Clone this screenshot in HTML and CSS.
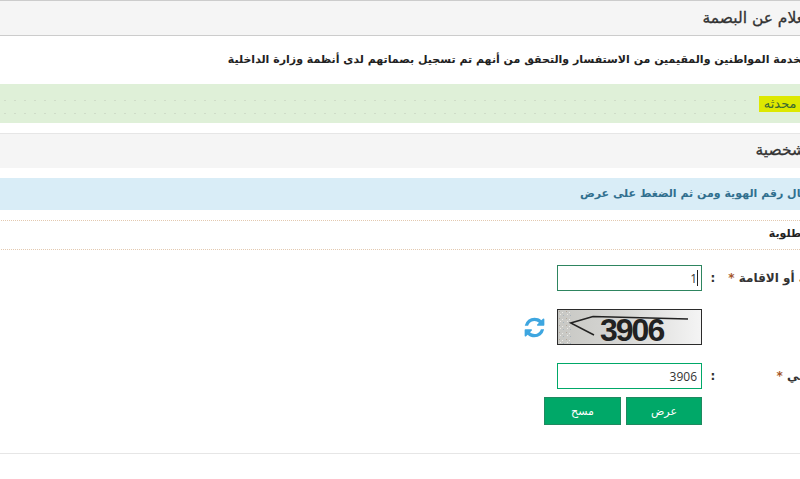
FILE: index.html
```html
<!DOCTYPE html>
<html lang="ar">
<head>
  <meta charset="UTF-8" />
  <meta name="viewport" content="width=device-width, initial-scale=1.0" />
  <title>الاستعلام عن البصمة</title>
  <link rel="stylesheet" href="styles.css">
</head>
<body>
  <div class="page" dir="rtl">
    <h1 class="panel-title first">الاستعلام عن البصمة</h1>
    <p class="intro">هذه الخدمة لخدمة المواطنين والمقيمين من الاستفسار والتحقق من أنهم تم تسجيل بصماتهم لدى أنظمة وزارة الداخلية</p>

    <div class="notice">
      <mark class="stamp">بيانات محدثه</mark>
      <span class="dots"></span>
    </div>

    <h2 class="panel-title second">المعلومات الشخصية</h2>
    <div class="hint">يرجى إدخال رقم الهوية ومن ثم الضغط على عرض</div>
    <div class="required-note">الحقول المطلوبة</div>

    <form class="form" onsubmit="return false">
      <div class="row">
        <label class="label" for="idNumber">رقم الهوية أو الاقامة <b>*</b></label>
        <span class="colon">:</span>
        <div class="field input-wrap">
          <input class="text-input first-input" type="text" id="idNumber" value="1" dir="ltr" />
          <span class="caret"></span>
        </div>
      </div>

      <div class="row captcha-row">
        <span class="label"></span>
        <span class="colon"></span>
        <div class="field captcha-field">
          <svg class="captcha" viewBox="0 0 143 34" width="145" height="36" preserveAspectRatio="none">
            <defs>
              <linearGradient id="fade" x1="0" x2="1" y1="0" y2="0">
                <stop offset="0" stop-color="#c8c8c4" />
                <stop offset="0.45" stop-color="#d6d6d4" />
                <stop offset="1" stop-color="#f4f4f4" />
              </linearGradient>
              <pattern id="speck" width="7" height="7" patternUnits="userSpaceOnUse">
                <rect x="1" y="1" width="1" height="1" fill="#b5a89c" />
                <rect x="4" y="2" width="1" height="1" fill="#ecebe8" />
                <rect x="2" y="4" width="1" height="1" fill="#ecebe8" />
                <rect x="5" y="5" width="1" height="1" fill="#a9b4bd" />
              </pattern>
            </defs>
            <rect width="143" height="34" fill="url(#fade)" />
            <rect width="15" height="34" fill="url(#speck)" />
            <path d="M36 25 L12.7 13 L35 6.6 L130 9" fill="none" stroke="#222" stroke-width="1.5" />
            <text class="captcha-text" x="42" y="31">3906</text>
          </svg>
          <svg class="reload" viewBox="0 0 1792 1792" width="23" height="23">
            <path fill="#3ea6e0" d="M1639 1056q0 5-1 7-64 268-268 434.5t-478 166.5q-146 0-282.5-55t-243.5-157l-129 129q-19 19-45 19t-45-19-19-45v-448q0-26 19-45t45-19h448q26 0 45 19t19 45-19 45l-137 137q71 66 161 102t187 36q134 0 250-65t186-179q11-17 53-117 8-23 30-23h192q13 0 22.5 9.5t9.5 22.5zm25-800v448q0 26-19 45t-45 19h-448q-26 0-45-19t-19-45 19-45l138-138q-148-137-349-137-134 0-250 65t-186 179q-11 17-53 117-8 23-30 23h-199q-13 0-22.5-9.5t-9.5-22.5v-7q65-268 270-434.5t480-166.5q146 0 284 55.5t245 156.5l130-129q19-19 45-19t45 19 19 45z" />
          </svg>
        </div>
      </div>

      <div class="row">
        <label class="label" for="captchaCode">الرمز المرئي <b>*</b></label>
        <span class="colon">:</span>
        <div class="field"><input class="text-input" type="text" id="captchaCode" value="3906" dir="ltr" /></div>
      </div>

      <div class="row buttons-row">
        <span class="label"></span>
        <span class="colon"></span>
        <div class="field buttons">
          <button class="btn">عرض</button>
          <button class="btn btn-clear">مسح</button>
        </div>
      </div>
    </form>

    <div class="bottom-line"></div>
  </div>
</body>
</html>
```

FILE: styles.css
```css
html, body {
  margin: 0;
  overflow: hidden;
  background: #fff;
}
.page {
  width: 1200px;
  margin-left: -300px;
  font-family: "DejaVu Sans", sans-serif;
  color: #333;
}
.panel-title {
  margin: 0;
  background: #f5f5f5;
  font-weight: normal;
  font-size: 15.5px;
  -webkit-text-stroke: 0.3px #333;
}
.panel-title.first {
  height: 34px;
  line-height: 34px;
  border-top: 1px solid #ccc;
  border-bottom: 1px solid #ccc;
  padding-right: 65px;
}
.panel-title.second {
  height: 34px;
  line-height: 32px;
  border-top: 1px solid #e6e6e6;
  margin-top: 10px;
  padding-right: 14px;
}
.intro {
  margin: 0;
  height: 48px;
  line-height: 48px;
  padding-right: 31px;
  font-size: 11px;
  font-weight: bold;
  color: #222;
}
.notice {
  height: 39px;
  background: #dff0d8;
  display: flex;
  align-items: center;
  padding-right: 63px;
}
.stamp {
  background: #dde800;
  color: #3c6a30;
  font-size: 13px;
  line-height: 16px;
  padding: 0 5px;
  margin-left: 8px;
}
.dots {
  flex: 1;
  height: 26px;
  background-image: radial-gradient(circle, #cfdcc8 0.6px, transparent 1px);
  background-size: 10px 13px;
  background-position: 0 3px;
}
.hint {
  margin-top: 10px;
  height: 32px;
  line-height: 32px;
  background: #d9edf7;
  color: #31708f;
  font-size: 11px;
  font-weight: bold;
  padding-right: 48px;
}
.required-note {
  margin-top: 10px;
  height: 28px;
  line-height: 26px;
  border-top: 1px dotted #e3c9b0;
  border-bottom: 1px dotted #e3c9b0;
  font-size: 11px;
  font-weight: bold;
  color: #222;
  padding-right: 39px;
}
.form {
  padding-top: 15px;
}
.row {
  display: flex;
  align-items: center;
  height: 26px;
  margin-bottom: 18px;
}
.captcha-row {
  height: 36px;
}
.buttons-row {
  height: 28px;
  margin-top: -10px;
  margin-bottom: 0;
}
.label {
  width: 134px;
  flex: none;
  margin-right: 37px;
  font-size: 12px;
  font-weight: bold;
  white-space: nowrap;
}
.label b {
  color: #a5572b;
}
.colon {
  box-sizing: border-box;
  width: 27px;
  flex: none;
  padding-right: 5px;
  font-size: 12px;
  font-weight: bold;
  text-align: center;
}
.field {
  display: flex;
  align-items: center;
}
.input-wrap {
  position: relative;
}
.text-input {
  box-sizing: border-box;
  width: 145px;
  height: 26px;
  border: 1px solid #00a868;
  padding: 0 4px;
  font-family: "Open Sans", sans-serif;
  font-size: 12px;
  color: #333;
  text-align: right;
  background: #fff;
  outline: none;
}
.first-input {
  border-color: #2e8560;
}
.caret {
  position: absolute;
  right: 4px;
  top: 5px;
  width: 1px;
  height: 16px;
  background: #222;
}
.captcha {
  display: block;
  box-sizing: border-box;
  border: 1px solid #2b2b2b;
}
.captcha-text {
  direction: ltr;
  font-family: "Liberation Sans", sans-serif;
  font-weight: bold;
  font-size: 32px;
  fill: #222;
  letter-spacing: -2px;
}
.reload {
  margin-right: 11px;
}
.buttons {
  gap: 5px;
}
.btn {
  box-sizing: border-box;
  height: 28px;
  width: 76px;
  border: 1px solid #1f8a60;
  background: #00a868;
  color: #fff;
  font-family: "DejaVu Sans", sans-serif;
  font-size: 11px;
  padding: 0;
}
.btn-clear {
  width: 77px;
}
.bottom-line {
  margin-top: 28px;
  border-top: 1px solid #e6e6e6;
}
```
